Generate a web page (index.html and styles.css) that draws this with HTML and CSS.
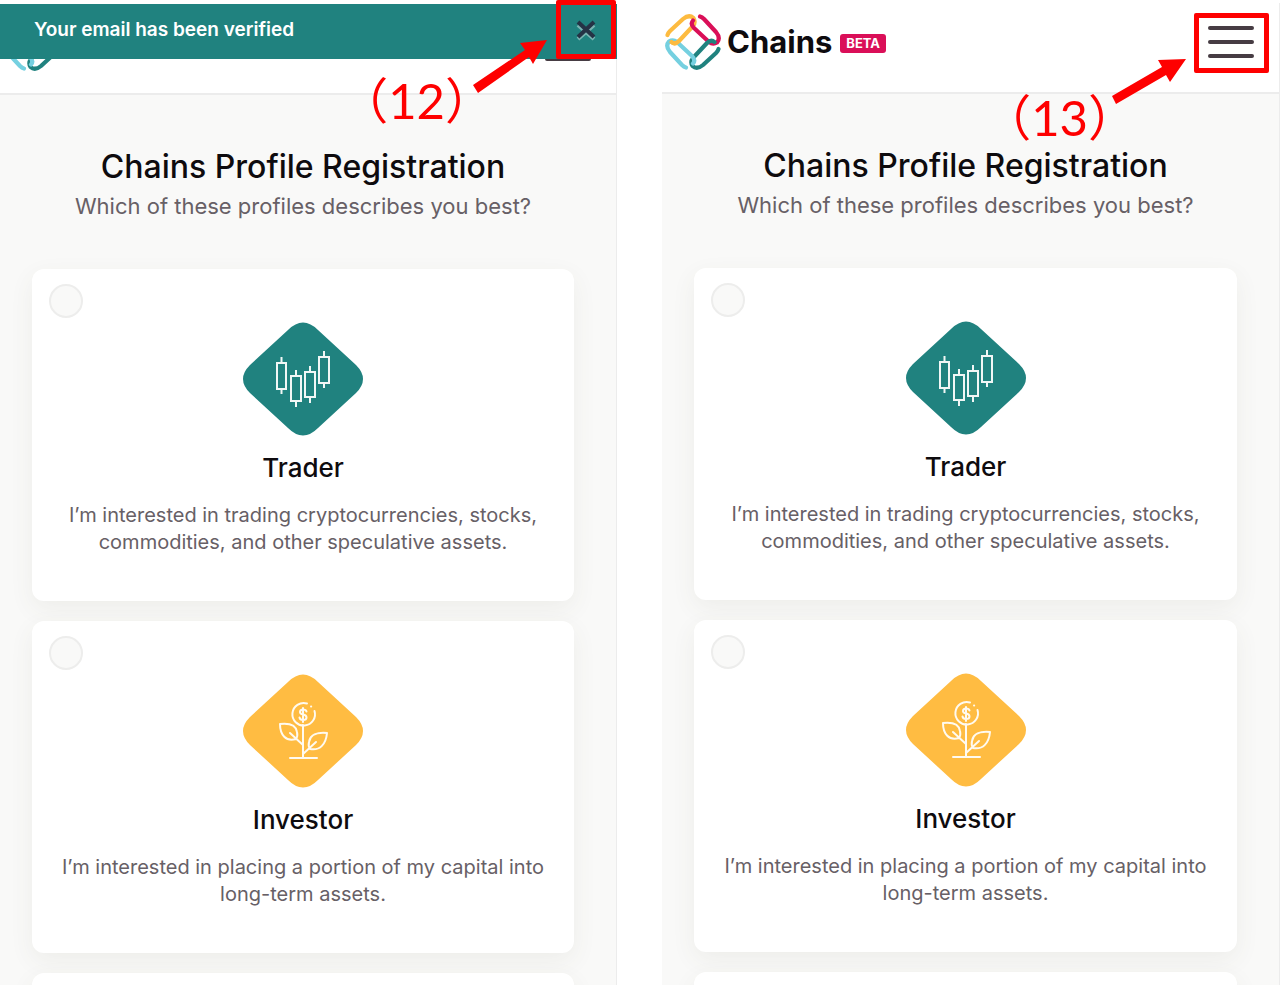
FILE: index.html
```html
<!DOCTYPE html>
<html lang="en">
<head>
<meta charset="utf-8">
<title>Chains Profile Registration</title>
<link rel="stylesheet" href="styles.css">
</head>
<body>
<svg class="defs" aria-hidden="true">
  <symbol id="logo" viewBox="0 0 56 56">
    <g fill="none" stroke-width="4.2" stroke-linecap="round" stroke-linejoin="round">
      <path stroke="#fdbb40" d="M2.500 21Q3 19 5 17L18 5Q24 0 28.500 4Q31 8 28 12L14 27Q10 31 6.500 28"/>
      <path stroke="#da0f58" transform="rotate(90 28 28)" d="M2.500 21Q3 19 5 17L18 5Q24 0 28.500 4Q31 8 28 12L14 27Q10 31 6.500 28"/>
      <path stroke="#20827f" transform="rotate(180 28 28)" d="M2.500 21Q3 19 5 17L18 5Q24 0 28.500 4Q31 8 28 12L14 27Q10 31 6.500 28"/>
      <path stroke="#75d0e0" transform="rotate(270 28 28)" d="M2.500 21Q3 19 5 17L18 5Q24 0 28.500 4Q31 8 28 12L14 27Q10 31 6.500 28"/>
      <path stroke="#fdbb40" d="M14 27Q10 31 6.500 28"/>
    </g>
  </symbol>
  <symbol id="trader" viewBox="0 0 120 114">
    <path fill="#20827f" d="M45 8Q60 -7 75 8L113 43Q127 57 113 71L75 106Q60 121 45 106L7 71Q-7 57 7 43Z"/>
    <g fill="none" stroke="#f1f7f6" stroke-width="2">
      <path d="M34 41H43V67H34ZM38.500 35V41M38.500 67V72M48 54H58V79H48ZM53 48V54M53 79V85M62 50H72V75H62ZM67 44V50M67 75V81M76 35H86V61H76ZM81 29V35M81 61V66"/>
    </g>
  </symbol>
  <symbol id="investor" viewBox="0 0 120 114">
    <path fill="#ffbc42" d="M45 8Q60 -7 75 8L113 43Q127 57 113 71L75 106Q60 121 45 106L7 71Q-7 57 7 43Z"/>
    <g fill="none" stroke="#fffaf0" stroke-width="2" stroke-linecap="round" stroke-linejoin="round">
      <path d="M64 29.500A11.300 11.300 0 1 0 71.500 37M68 32.500H68.200M60 51V84M47 84H74"/>
      <path d="M37 50C46 49 53 51 54 58Q55 62 53 65C43 68 37 61 37 50ZM47 59L60 71M84 59C74 58 67 61 66 68Q65 72 67 75C77 77 83 70 84 59ZM73 68L60 80"/>
      <path d="M63.500 37.500Q63 35.500 60 35.500Q57 35.500 57 38Q57 40 60 40.500Q63.500 41 63.500 43.500Q63.500 46 60 46Q57 46 56.500 43.500M60 34V48"/>
    </g>
  </symbol>
</svg>

<div class="board">
  <section class="screen screen-verified">
    <header class="topbar">
      <a class="brand" href="#" aria-label="Chains"><svg class="logo"><use href="#logo"/></svg></a>
      <button class="menu" type="button" aria-label="Menu"><span></span><span></span><span></span></button>
    </header>
    <div class="toast" role="status">
      <p>Your email has been verified</p>
      <button class="close" type="button" aria-label="Close">
        <svg viewBox="0 0 24 24"><path class="close-shade" d="M4 7L20 21M20 7L4 21"/><path class="close-mark" d="M4 4L20 19M20 4L4 19"/></svg>
      </button>
    </div>
    <main class="content">
      <h1>Chains Profile Registration</h1>
      <p class="lead">Which of these profiles describes you best?</p>
      <div class="cards">
        <label class="card"><input type="radio" name="profile-a"><svg class="badge"><use href="#trader"/></svg><strong>Trader</strong><span class="text">I’m interested in trading cryptocurrencies, stocks, commodities, and other speculative assets.</span></label>
        <label class="card"><input type="radio" name="profile-a"><svg class="badge"><use href="#investor"/></svg><strong>Investor</strong><span class="text">I’m interested in placing a portion of my capital into long-term assets.</span></label>
        <div class="card"></div>
      </div>
    </main>
    <div class="mark mark-close"></div>
    <svg class="arrow arrow-close" viewBox="0 0 74 54"><path d="M0 45L52 10L47 3L74 0L60 24L56 17L5 53Z"/></svg>
    <div class="step step-close">（12）</div>
  </section>

  <section class="screen screen-menu">
    <header class="topbar">
      <a class="brand" href="#"><svg class="logo"><use href="#logo"/></svg><span class="name">Chains</span><span class="beta">BETA</span></a>
      <button class="menu" type="button" aria-label="Menu"><span></span><span></span><span></span></button>
    </header>
    <main class="content">
      <h1>Chains Profile Registration</h1>
      <p class="lead">Which of these profiles describes you best?</p>
      <div class="cards">
        <label class="card"><input type="radio" name="profile-b"><svg class="badge"><use href="#trader"/></svg><strong>Trader</strong><span class="text">I’m interested in trading cryptocurrencies, stocks, commodities, and other speculative assets.</span></label>
        <label class="card"><input type="radio" name="profile-b"><svg class="badge"><use href="#investor"/></svg><strong>Investor</strong><span class="text">I’m interested in placing a portion of my capital into long-term assets.</span></label>
        <div class="card"></div>
      </div>
    </main>
    <div class="mark mark-menu"></div>
    <svg class="arrow arrow-menu" viewBox="0 0 74 46"><path d="M0 37L50 8L46 1L74 0L58 23L54 16L4 45Z"/></svg>
    <div class="step step-menu">（13）</div>
  </section>
</div>
</body>
</html>
```
FILE: styles.css
```css
* { box-sizing: border-box; }
body {
  margin: 0;
  background: #fff;
  color: #0e0b0e;
  font-family: Inter, "Liberation Sans", sans-serif;
}
h1, p { margin: 0; }
button { padding: 0; border: 0; background: none; }
.defs { position: absolute; width: 0; height: 0; }

.board {
  display: grid;
  grid-template-columns: 617fr 618fr;
  gap: 45px;
  height: 100vh;
  overflow: hidden;
}
.screen {
  position: relative;
  display: flex;
  flex-direction: column;
  min-width: 0;
}
.screen-verified { padding-top: 4px; }
.screen-menu { padding-top: 3px; }

.topbar {
  display: flex;
  align-items: center;
  justify-content: space-between;
  flex: none;
  height: 91px;
  padding: 0 25px 12px 3px;
  border-bottom: 2px solid #ececec;
  border-right: 1px solid #ececec;
  background: #fff;
}
.screen-verified .menu { margin-top: 5px; }
.brand {
  display: flex;
  align-items: center;
  color: #0e0b0e;
  text-decoration: none;
}
.logo { width: 56px; height: 56px; }
.name { margin-left: 6px; font-size: 31px; line-height: 36px; font-weight: 700; }
.beta {
  margin: 4px 0 0 8px;
  padding: 0 6px;
  border-radius: 3px;
  background: #da0f58;
  color: #fff;
  font-size: 13px;
  line-height: 19px;
  font-weight: 700;
}
.menu { display: grid; gap: 10px; width: 46px; }
.menu span { height: 4px; border-radius: 2px; background: #463c43; }

.toast {
  position: absolute;
  top: 4px;
  left: 0;
  right: 0;
  display: flex;
  align-items: center;
  justify-content: space-between;
  height: 55px;
  padding: 0 19px 4px 34px;
  background: #20827f;
  color: #fff;
  font-size: 19px;
  line-height: 24px;
  font-weight: 600;
}
.close { width: 24px; height: 24px; }
.close svg { display: block; width: 24px; height: 24px; fill: none; stroke-width: 4; }
.close-shade { stroke: #79b4b2; }
.close-mark { stroke: #253245; }

.content {
  flex: 1 0 auto;
  padding: 54px 42px 0 32px;
  border-right: 1px solid #ececec;
  background: #f9f9f8;
  text-align: center;
}
h1 { font-size: 32px; line-height: 36px; font-weight: 500; white-space: nowrap; }
.lead { margin-top: 8px; color: #676066; font-size: 22px; line-height: 27px; white-space: nowrap; }
.cards { display: grid; gap: 20px; margin-top: 49px; }
.card {
  position: relative;
  display: flex;
  flex-direction: column;
  align-items: center;
  min-height: 332px;
  padding: 53px 16px 45px;
  border-radius: 12px;
  background: #fff;
  box-shadow: 0 8px 24px rgba(80, 80, 60, 0.07);
}
.card input {
  appearance: none;
  position: absolute;
  top: 15px;
  left: 17px;
  width: 34px;
  height: 34px;
  margin: 0;
  border: 2px solid #ededec;
  border-radius: 50%;
  background: #f9f9f8;
}
.badge { width: 120px; height: 114px; }
.card strong { margin-top: 18px; font-size: 26px; line-height: 28px; font-weight: 500; }
.text { margin-top: 20px; color: #676066; font-size: 20px; line-height: 27px; }

.mark { position: absolute; border: 5px solid #fe0000; border-radius: 2px; }
.mark-close { top: 0; right: 1px; width: 60px; height: 59px; }
.mark-menu { top: 13px; right: 11px; width: 75px; height: 60px; }
.arrow { position: absolute; fill: #fe0000; }
.arrow-close { top: 40px; right: 70px; width: 74px; height: 54px; }
.arrow-menu { top: 59px; right: 94px; width: 74px; height: 46px; }
.step {
  position: absolute;
  color: #fe0000;
  font-family: Lato, "Noto Sans CJK JP", sans-serif;
  font-size: 49px;
  line-height: 60px;
  white-space: nowrap;
}
.step-close { top: 70px; right: 123px; }
.step-menu { top: 87px; right: 143px; }
```
